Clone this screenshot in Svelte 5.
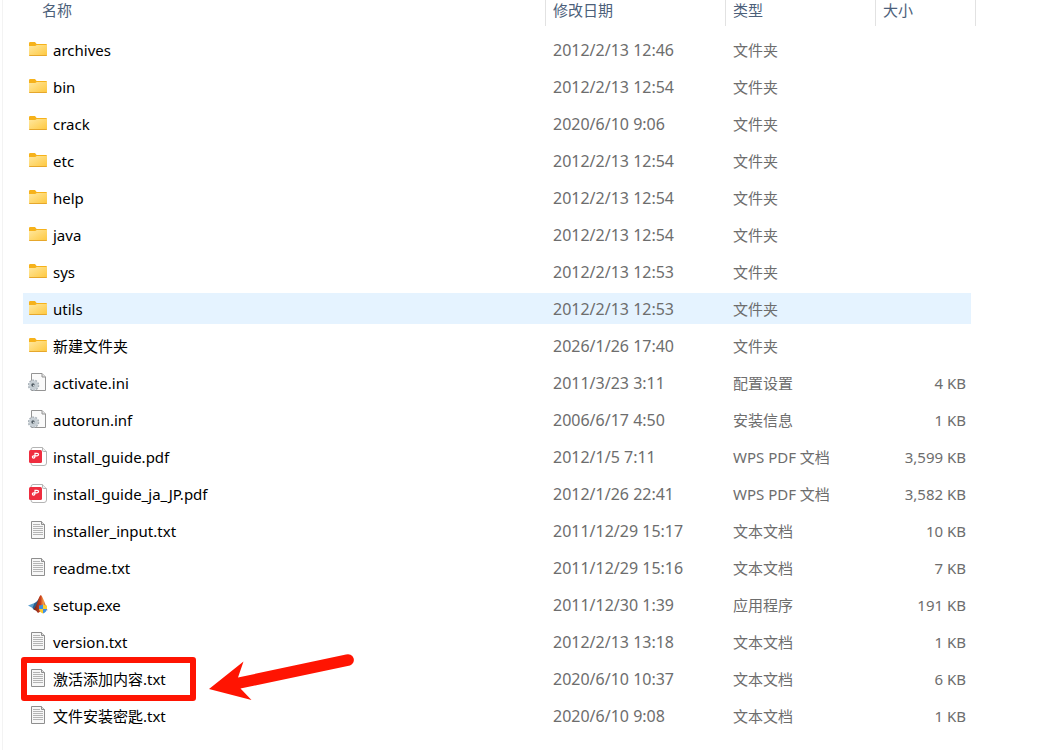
<script>
  const files = [
    { name: 'archives', date: '2012/2/13 12:46', kind: '文件夹', size: '', icon: 'folder' },
    { name: 'bin', date: '2012/2/13 12:54', kind: '文件夹', size: '', icon: 'folder' },
    { name: 'crack', date: '2020/6/10 9:06', kind: '文件夹', size: '', icon: 'folder' },
    { name: 'etc', date: '2012/2/13 12:54', kind: '文件夹', size: '', icon: 'folder' },
    { name: 'help', date: '2012/2/13 12:54', kind: '文件夹', size: '', icon: 'folder' },
    { name: 'java', date: '2012/2/13 12:54', kind: '文件夹', size: '', icon: 'folder' },
    { name: 'sys', date: '2012/2/13 12:53', kind: '文件夹', size: '', icon: 'folder' },
    { name: 'utils', date: '2012/2/13 12:53', kind: '文件夹', size: '', icon: 'folder', active: true },
    { name: '新建文件夹', date: '2026/1/26 17:40', kind: '文件夹', size: '', icon: 'folder' },
    { name: 'activate.ini', date: '2011/3/23 3:11', kind: '配置设置', size: '4 KB', icon: 'config' },
    { name: 'autorun.inf', date: '2006/6/17 4:50', kind: '安装信息', size: '1 KB', icon: 'config' },
    { name: 'install_guide.pdf', date: '2012/1/5 7:11', kind: 'WPS PDF 文档', size: '3,599 KB', icon: 'pdf' },
    { name: 'install_guide_ja_JP.pdf', date: '2012/1/26 22:41', kind: 'WPS PDF 文档', size: '3,582 KB', icon: 'pdf' },
    { name: 'installer_input.txt', date: '2011/12/29 15:17', kind: '文本文档', size: '10 KB', icon: 'text' },
    { name: 'readme.txt', date: '2011/12/29 15:16', kind: '文本文档', size: '7 KB', icon: 'text' },
    { name: 'setup.exe', date: '2011/12/30 1:39', kind: '应用程序', size: '191 KB', icon: 'app' },
    { name: 'version.txt', date: '2012/2/13 13:18', kind: '文本文档', size: '1 KB', icon: 'text' },
    { name: '激活添加内容.txt', date: '2020/6/10 10:37', kind: '文本文档', size: '6 KB', icon: 'text', marked: true },
    { name: '文件安装密匙.txt', date: '2020/6/10 9:08', kind: '文本文档', size: '1 KB', icon: 'text' }
  ];
</script>

<svg class="defs" width="0" height="0" aria-hidden="true">
  <defs>
    <linearGradient id="folder-front" x1="0" y1="0" x2="1" y2="1">
      <stop offset="0" stop-color="#ffe8a0" />
      <stop offset="1" stop-color="#fec73c" />
    </linearGradient>
    <linearGradient id="peak" x1="0" y1="0" x2="1" y2="0">
      <stop offset="0" stop-color="#6b1f1a" />
      <stop offset="0.5" stop-color="#c8401c" />
      <stop offset="0.7" stop-color="#f39a4a" />
      <stop offset="1" stop-color="#a82a18" />
    </linearGradient>
  </defs>
</svg>

<main>
  <table>
    <colgroup>
      <col />
      <col class="col-date" />
      <col class="col-kind" />
      <col class="col-size" />
    </colgroup>
    <thead>
      <tr>
        <th scope="col"><div class="head first">名称</div></th>
        <th scope="col"><div class="head">修改日期</div></th>
        <th scope="col"><div class="head">类型</div></th>
        <th scope="col"><div class="head last">大小</div></th>
      </tr>
    </thead>
    <tbody>
      {#each files as file (file.name)}
        <tr class:active={file.active}>
          <td>
            <div class="name">
              <svg class="icon" viewBox="0 0 20 20" aria-hidden="true">
                {#if file.icon === 'folder'}
                  <path d="M1 3.2Q1 2 2.2 2H7L8.6 4H18Q19 4 19 5V8H1Z" fill="#f6b21b" />
                  <path d="M1 6H7.2L8.8 5H19V15Q19 16 18 16H2Q1 16 1 15Z" fill="url(#folder-front)" />
                  <path d="M1 15H19Q19 16 18 16H2Q1 16 1 15Z" fill="#e6a72c" />
                {:else if file.icon === 'config'}
                  <path d="M3.5 .5H14L17.5 4V17.5H3.5Z" fill="#fafafa" stroke="#949494" />
                  <path d="M14 .5V4H17.5" fill="#e5e5e5" stroke="#949494" />
                  <circle cx="5.5" cy="12.2" r="5" fill="#d3d9de" stroke="#a9b2b9" stroke-width="1.6" stroke-dasharray="1.8 1.3" />
                  <circle cx="5.5" cy="12.2" r="4" fill="#c6ced4" />
                  <circle cx="5" cy="12" r="1.7" fill="#4e5961" />
                  <circle cx="5.8" cy="12.6" r=".8" fill="#d9dfe3" />
                {:else if file.icon === 'pdf'}
                  <path d="M5 .5H14.5L18.5 4.5V16Q18.5 18.5 16 18.5H5Q3 18.5 3 16V3Q3 .5 5 .5Z" fill="#fff" stroke="#b4b4b4" />
                  <path d="M14.5 .5V3.5Q14.5 4.5 15.5 4.5H18.5" fill="#eee" stroke="#b4b4b4" />
                  <rect x="1" y="3" width="13" height="13" rx="1.5" fill="#ef2d3f" />
                  <path d="M7 8.8V6.4H9Q10.6 6.4 10.6 7.6Q10.6 8.8 9 8.8H5.6Q4.4 8.8 4.4 10Q4.4 11.2 5.6 11.2Q7 11.2 7 8.8" fill="none" stroke="#fff" stroke-width="1.2" />
                {:else if file.icon === 'text'}
                  <path d="M3.5 .5H13.5L16.5 3.5V17.5H3.5Z" fill="#f7f7f7" stroke="#8e8e8e" />
                  <path d="M13.5 .5V3.5H16.5" fill="#ddd" stroke="#8e8e8e" />
                  <path d="M5 3.5H12M5 5.5H15M5 7.5H15M5 9.5H15M5 11.5H15M5 13.5H15" stroke="#b4b4b4" />
                {:else}
                  <path d="M0 10.5L6.5 8L9 10L5.5 13.5Z" fill="#5b9fd0" />
                  <path d="M6.5 8Q9 7 12 2L9.5 12L5.5 14.5L4.5 13Z" fill="#2c5d8c" />
                  <path d="M5.5 14.5Q8 12 9.5 7Q11.5 0 13 0Q15 2 19.5 15.5Q16 13 13 16L10 18Q8.5 15 5.5 14.5Z" fill="url(#peak)" />
                  <path d="M11 10.5Q13 10.5 15 9.5V14H11Z" fill="#3f8fe0" />
                  <path d="M15 9.5Q17 10.5 19 10.5V14H15Z" fill="#fccb2c" />
                  <path d="M11 14H15V18.5Q11.5 17 11 14Z" fill="#fccb2c" />
                  <path d="M15 14H19Q18.5 17 15 18.5Z" fill="#3f8fe0" />
                {/if}
              </svg>
              <span>{file.name}</span>
              {#if file.marked}
                <div class="frame"></div>
                <svg class="arrow" viewBox="0 0 146 48" aria-hidden="true">
                  <path d="M0 35L34.5 7.5L29 23.5L137 .6A5.7 5.7 0 0 1 141 11.6L31.5 34.5L42.5 46Z" fill="#ff1402" />
                </svg>
              {/if}
            </div>
          </td>
          <td class="date">{file.date}</td>
          <td>{file.kind}</td>
          <td class="size">{file.size}</td>
        </tr>
      {/each}
    </tbody>
  </table>
</main>

<style>
  :global(body) {
    margin: 0;
    background: #fff;
  }

  .defs {
    position: absolute;
  }

  main {
    box-sizing: border-box;
    min-height: 100vh;
    margin-left: 2px;
    padding: 0 79px 0 20px;
    border-left: 1px solid #f3f3f3;
    font: 15px/22px 'Noto Sans', 'Noto Sans CJK SC', sans-serif;
    color: #6d6d6d;
    overflow: hidden;
  }

  table {
    width: 100%;
    table-layout: fixed;
    border-collapse: separate;
    border-spacing: 0;
  }

  .col-date {
    width: 180px;
  }

  .col-kind {
    width: 150px;
  }

  .col-size {
    width: 100px;
  }

  th {
    padding: 0 0 5px;
    font-weight: 400;
    line-height: 20px;
    text-align: left;
    color: #4c607a;
  }

  .head {
    box-sizing: border-box;
    height: 26px;
    padding-left: 7px;
    border-left: 1px solid #e2e2e2;
  }

  .head.first {
    padding-left: 19px;
    border-left: 0;
  }

  .head.last {
    margin-right: -1px;
    border-right: 1px solid #e2e2e2;
  }

  td {
    box-sizing: border-box;
    height: 37px;
    padding: 0 0 0 8px;
    border: 0 solid transparent;
    border-width: 3px 0;
    background-clip: padding-box;
    white-space: nowrap;
  }

  td:first-child {
    padding-left: 5px;
    border-radius: 3px 0 0 3px;
    color: #000;
  }

  td.date {
    font-size: 16px;
  }

  td.size {
    padding: 0 5px 0 0;
    border-right-width: 4px;
    text-align: right;
  }

  .active td {
    background-color: #e5f3ff;
  }

  .name {
    position: relative;
    display: flex;
    align-items: center;
    gap: 5px;
  }

  .icon {
    width: 20px;
    height: 20px;
    flex: none;
  }

  .frame {
    position: absolute;
    left: -7px;
    top: -11px;
    box-sizing: border-box;
    width: 175px;
    height: 44px;
    border: 6px solid #ff1402;
    border-radius: 3px;
  }

  .arrow {
    position: absolute;
    left: 181px;
    top: -14px;
    width: 146px;
    height: 48px;
  }
</style>
